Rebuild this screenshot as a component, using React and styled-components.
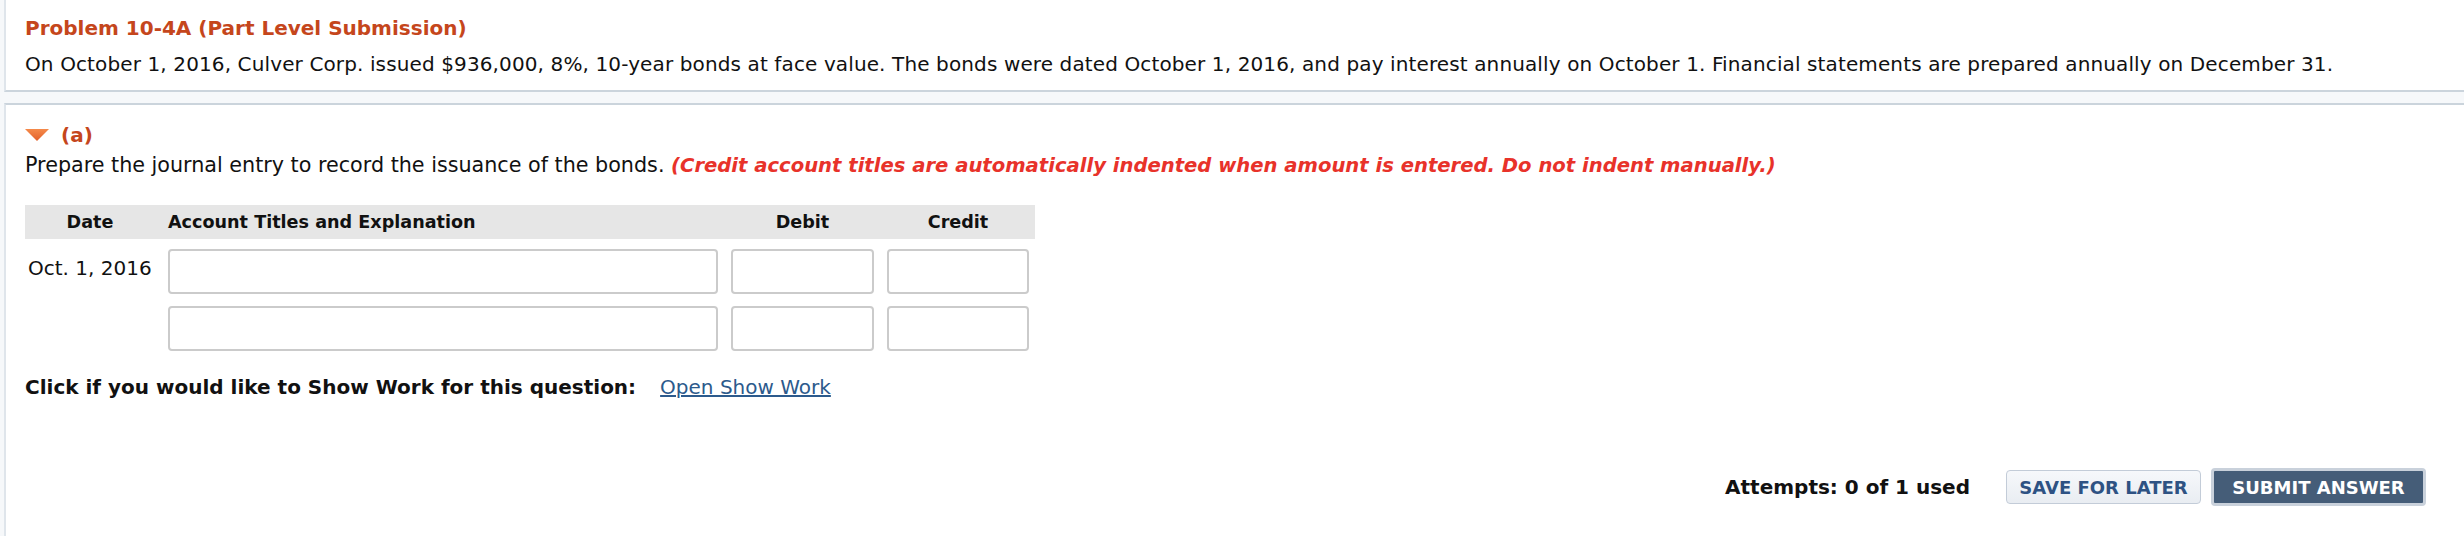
import React from "react";
import styled, { createGlobalStyle } from "styled-components";

const GlobalStyle = createGlobalStyle`
  html, body {
    margin: 0;
    background: #f6f8fa;
  }
  body {
    font-family: "DejaVu Sans", Verdana, sans-serif;
    font-size: 20px;
    line-height: 24px;
    color: #111;
  }
`;

const Page = styled.div`
  padding-left: 4px;
`;

const IntroPanel = styled.section`
  background: #fff;
  border-left: 2px solid #dfe5eb;
  border-bottom: 2px solid #cbd4dc;
  padding: 16px 0 14px 19px;
`;

const Title = styled.h1`
  margin: 0 0 12px;
  font-size: 20px;
  line-height: 24px;
  font-weight: bold;
  color: #c5461c;
`;

const Text = styled.p`
  margin: 0;
  letter-spacing: 0.12px;
`;

const PartPanel = styled.section`
  margin-top: 11px;
  background: #fff;
  border-top: 2px solid #cbd4dc;
  border-left: 2px solid #dfe5eb;
  padding: 18px 38px 40px 19px;
`;

const PartHeader = styled.div`
  display: flex;
  align-items: center;
  gap: 12px;
  font-weight: bold;
  color: #c5461c;
`;

const Prompt = styled.p`
  margin: 6px 0 0;
  font-size: 20.7px;
`;

const Note = styled.em`
  font-size: 19.6px;
  font-weight: bold;
  color: #e8322a;
`;

const Journal = styled.div`
  margin-top: 27px;
  width: 1010px;
`;

const Row = styled.div`
  display: grid;
  grid-template-columns: 130px 550px 143px 142px;
  column-gap: 13px;
  align-items: center;
  margin-top: ${(p) => (p.$first ? "10px" : "12px")};
`;

const HeadRow = styled(Row)`
  margin-top: 0;
  height: 34px;
  background: #e6e6e6;
  font-size: 17.6px;
  font-weight: bold;
`;

const HeadCell = styled.div`
  text-align: ${(p) => p.$align || "center"};
`;

const DateCell = styled.div`
  padding-left: 3px;
  align-self: start;
  padding-top: 7px;
  white-space: nowrap;
`;

const Field = styled.input`
  box-sizing: border-box;
  height: 45px;
  width: 100%;
  border: 2px solid #cbcbcb;
  border-radius: 4px;
  background: #fff;
  outline: none;
`;

const ShowWork = styled.div`
  margin-top: 24px;
  display: flex;
  gap: 24px;
`;

const Strong = styled.span`
  font-weight: bold;
`;

const Link = styled.a`
  color: #2c5a8c;
  text-decoration: underline;
`;

const Footer = styled.div`
  margin-top: 69px;
  display: flex;
  justify-content: flex-end;
  align-items: center;
`;

const Attempts = styled(Strong)`
  margin-right: 36px;
`;

const Button = styled.button`
  box-sizing: border-box;
  font-family: "DejaVu Sans", Verdana, sans-serif;
  font-weight: bold;
  font-size: 18px;
  text-transform: uppercase;
  border-radius: 4px;
  padding: 0;
  cursor: pointer;
`;

const SaveButton = styled(Button)`
  width: 195px;
  height: 34px;
  color: #2e5283;
  background: linear-gradient(#f6f8fb, #e9edf2);
  border: 1px solid #c3ccd8;
  margin-right: 10px;
`;

const SubmitButton = styled(Button)`
  width: 215px;
  height: 38px;
  color: #fff;
  background: #455d78;
  border: 3px solid #c9d1db;
`;

const Caret = () => (
  <svg width="24" height="12" viewBox="0 0 24 12">
    <defs>
      <linearGradient id="caretFill" x1="0" y1="0" x2="0" y2="1">
        <stop offset="0" stopColor="#f58a4a" />
        <stop offset="1" stopColor="#e2602a" />
      </linearGradient>
    </defs>
    <path d="M0 0 H24 L12 12 Z" fill="url(#caretFill)" />
  </svg>
);

const entries = [{ date: "Oct. 1, 2016" }, { date: "" }];

export default function App() {
  return (
    <Page>
      <GlobalStyle />
      <IntroPanel>
        <Title>Problem 10-4A (Part Level Submission)</Title>
        <Text>
          On October 1, 2016, Culver Corp. issued $936,000, 8%, 10-year bonds at face value. The bonds were dated
          October 1, 2016, and pay interest annually on October 1. Financial statements are prepared annually on
          December 31.
        </Text>
      </IntroPanel>
      <PartPanel>
        <PartHeader>
          <Caret />
          <span>(a)</span>
        </PartHeader>
        <Prompt>
          Prepare the journal entry to record the issuance of the bonds.{" "}
          <Note>(Credit account titles are automatically indented when amount is entered. Do not indent manually.)</Note>
        </Prompt>
        <Journal>
          <HeadRow>
            <HeadCell>Date</HeadCell>
            <HeadCell $align="left">Account Titles and Explanation</HeadCell>
            <HeadCell>Debit</HeadCell>
            <HeadCell>Credit</HeadCell>
          </HeadRow>
          {entries.map((e, i) => (
            <Row key={i} $first={i === 0}>
              <DateCell>{e.date}</DateCell>
              <Field type="text" />
              <Field type="text" />
              <Field type="text" />
            </Row>
          ))}
        </Journal>
        <ShowWork>
          <Strong>Click if you would like to Show Work for this question:</Strong>
          <Link href="#">Open Show Work</Link>
        </ShowWork>
        <Footer>
          <Attempts>Attempts: 0 of 1 used</Attempts>
          <SaveButton>Save for Later</SaveButton>
          <SubmitButton>Submit Answer</SubmitButton>
        </Footer>
      </PartPanel>
    </Page>
  );
}
